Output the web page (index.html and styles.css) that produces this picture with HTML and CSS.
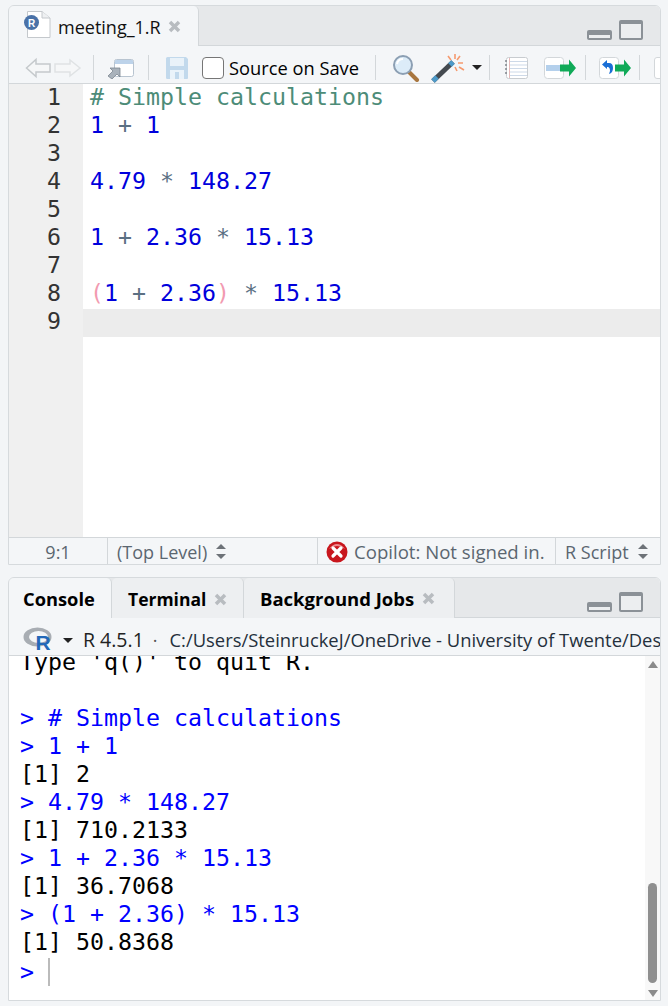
FILE: index.html
```html
<!DOCTYPE html>
<html lang="en">
<head>
<meta charset="utf-8">
<title>RStudio</title>
<link rel="stylesheet" href="styles.css">
</head>
<body>
<section class="pane source">
  <div class="tabstrip">
    <div class="tab file-tab">
      <svg class="file-icon" width="27" height="28" viewBox="0 0 27 28">
        <path d="M3.500 .5H18L26 7V26.500H3.500Z" fill="#fff" stroke="#c4c8cc"/>
        <path d="M18 .5V7H26" fill="#eef0f2" stroke="#c4c8cc"/>
        <circle cx="7.500" cy="11.500" r="7.500" fill="#4a72a8"/>
        <text x="7.500" y="15.500" class="r-glyph">R</text>
      </svg>
      <span class="tab-name">meeting_1.R</span>
      <svg class="x" width="13" height="13" viewBox="0 0 13 13"><path d="M2 2L11 11M11 2L2 11"/></svg>
    </div>
    <div class="win-btns">
      <svg width="58" height="22" viewBox="0 0 58 22">
        <rect x="1" y="11" width="25" height="10" rx="2" fill="#8b9197"/>
        <rect x="3" y="16" width="21" height="3" fill="#eceef0"/>
        <rect x="33" y="1" width="24" height="20" rx="2" fill="#8b9197"/>
        <rect x="35" y="5" width="20" height="14" fill="#eceef0"/>
      </svg>
    </div>
  </div>
  <div class="toolbar">
    <svg width="57" height="22" viewBox="0 0 57 22">
      <path d="M1.500 11L11 2.500V7H25V15H11V19.500Z" fill="#f6f7f8" stroke="#c5c9cc" stroke-width="1.500"/>
      <path d="M55 11L45 3V7H30V15H45V19Z" fill="#f6f7f8" stroke="#dfe2e4" stroke-width="1.500"/>
    </svg>
    <i class="sep s1"></i>
    <svg class="t-pop" width="28" height="22" viewBox="0 0 28 22">
      <rect x="7.500" y="2.500" width="19" height="17" rx="2" fill="#fff" stroke="#b8c4d0"/>
      <path d="M8 7V4Q8 3 9 3H25Q26 3 26 4V7Z" fill="#bdd3ea"/>
      <path d="M1 19L6 14L3 11H13V20L10 17L5 22Z" fill="#a9b2bb" stroke="#7c8791" stroke-width=".8"/>
    </svg>
    <i class="sep s2"></i>
    <svg class="t-save" width="24" height="24" viewBox="0 0 24 24">
      <path d="M1 2.500Q1 1 2.500 1H21L23 3V22Q23 23 22 23H2.500Q1 23 1 22Z" fill="#c2d9ec"/>
      <rect x="5" y="2" width="14" height="8" fill="#e9f2f9"/>
      <rect x="5" y="14" width="14" height="9" fill="#eaf3fa"/>
      <rect x="10" y="16" width="4" height="7" fill="#c2d9ec"/>
    </svg>
    <span class="check"></span>
    <span class="source-save">Source on Save</span>
    <i class="sep s3"></i>
    <svg class="t-find" width="28" height="28" viewBox="0 0 28 28">
      <path d="M16 17L25 26" stroke="#a8763f" stroke-width="4" stroke-linecap="round"/>
      <circle cx="11" cy="11" r="9" fill="#dcecf8" stroke="#8c9fb3" stroke-width="2"/>
      <path d="M5 10Q6 5 11 5" stroke="#fff" stroke-width="2" fill="none"/>
    </svg>
    <svg class="t-wand" width="34" height="30" viewBox="0 0 34 30">
      <path d="M2 28L22 9" stroke="#444a50" stroke-width="5"/>
      <path d="M2 28L6 24" stroke="#4d9ac9" stroke-width="5"/>
      <path d="M19 12L22 9" stroke="#4d9ac9" stroke-width="5"/>
      <path d="M24 1V6M32 10H27M24 14L26 18M29 3L26 7M17 3L20 7M33 17L28 14" stroke="#f59a6f" stroke-width="1.600"/>
    </svg>
    <span class="caret"></span>
    <i class="sep s4"></i>
    <svg class="t-note" width="24" height="24" viewBox="0 0 24 24">
      <rect x="1.500" y="1.500" width="21" height="21" rx="2" fill="#fff" stroke="#c8ccd0"/>
      <path d="M5 5.500H22M5 9H22M5 12.500H22M5 16H22M5 19.500H22" stroke="#cdd9e8"/>
      <path d="M4.500 2V22" stroke="#e5b8b8"/>
      <path d="M1 4V6M1 8V10M1 12V14M1 16V18" stroke="#80868c" stroke-width="1.500"/>
    </svg>
    <svg class="t-run" width="33" height="22" viewBox="0 0 33 22">
      <rect x=".5" y=".5" width="19" height="21" rx="3" fill="#fff" stroke="#d3d7da"/>
      <rect x="2" y="8" width="14" height="6" fill="#b4d0ec"/>
      <path d="M16 7.500H25V2.500L32 11L25 19.500V14.500H16Z" fill="#10aa58"/>
    </svg>
    <i class="sep s5"></i>
    <svg class="t-rerun" width="33" height="22" viewBox="0 0 33 22">
      <rect x=".5" y=".5" width="19" height="21" rx="3" fill="#fff" stroke="#d3d7da"/>
      <path d="M3 7.500L8 3V6H10Q14 6 14 11T10 17L11 14Q11 10 8.500 10H8V12Z" fill="#1a6fd6"/>
      <path d="M16 7.500H25V2.500L32 11L25 19.500V14.500H16Z" fill="#10aa58"/>
    </svg>
    <i class="sep s6"></i>
    <span class="t-cut"></span>
  </div>
  <div class="editor">
    <div class="gutter">
      <div class="gl">1</div><div class="gl">2</div><div class="gl">3</div><div class="gl">4</div><div class="gl">5</div><div class="gl">6</div><div class="gl">7</div><div class="gl">8</div><div class="gl">9</div>
    </div>
    <div class="code">
      <div class="ln cm"># Simple calculations</div>
      <div class="ln"><b>1</b> <s>+</s> <b>1</b></div>
      <div class="ln"></div>
      <div class="ln"><b>4.79</b> <s>*</s> <b>148.27</b></div>
      <div class="ln"></div>
      <div class="ln"><b>1</b> <s>+</s> <b>2.36</b> <s>*</s> <b>15.13</b></div>
      <div class="ln"></div>
      <div class="ln"><u>(</u><b>1</b> <s>+</s> <b>2.36</b><u>)</u> <s>*</s> <b>15.13</b></div>
      <div class="ln active"></div>
    </div>
  </div>
  <div class="status">
    <div class="st st-pos">9:1</div>
    <div class="st st-scope">(Top Level)<span class="updown"></span></div>
    <div class="st st-copilot">
      <svg width="22" height="22" viewBox="0 0 22 22">
        <circle cx="11" cy="11" r="10.500" fill="#c8161d"/>
        <path d="M3 8Q11 2 19 8Q15 3 11 3T3 8Z" fill="#ee8b8f"/>
        <path d="M7 7L15 15M15 7L7 15" stroke="#fff" stroke-width="3.200" stroke-linecap="round"/>
      </svg>
      <span>Copilot: Not signed in.</span>
    </div>
    <div class="st st-type">R Script<span class="updown"></span></div>
  </div>
</section>

<section class="pane con">
  <div class="tabstrip">
    <div class="tab con-tab">Console</div>
    <div class="tab off term">Terminal<svg class="x" width="13" height="13" viewBox="0 0 13 13"><path d="M2 2L11 11M11 2L2 11"/></svg></div>
    <div class="tab off jobs">Background Jobs<svg class="x" width="13" height="13" viewBox="0 0 13 13"><path d="M2 2L11 11M11 2L2 11"/></svg></div>
    <div class="win-btns">
      <svg width="58" height="22" viewBox="0 0 58 22">
        <rect x="1" y="11" width="25" height="10" rx="2" fill="#8b9197"/>
        <rect x="3" y="16" width="21" height="3" fill="#eceef0"/>
        <rect x="33" y="1" width="24" height="20" rx="2" fill="#8b9197"/>
        <rect x="35" y="5" width="20" height="14" fill="#eceef0"/>
      </svg>
    </div>
  </div>
  <div class="toolbar con-bar">
    <svg class="r-logo" width="32" height="24" viewBox="0 0 32 24">
      <ellipse cx="14.500" cy="10" rx="14" ry="9.500" fill="#a8adb3"/>
      <ellipse cx="15.500" cy="10" rx="9.500" ry="6" fill="#f4f6f8"/>
      <text x="20" y="23" class="r-big">R</text>
    </svg>
    <span class="caret c2"></span>
    <span class="rver">R 4.5.1</span>
    <span class="dot">·</span>
    <span class="path">C:/Users/SteinruckeJ/OneDrive - University of Twente/Desktop</span>
  </div>
  <div class="console">
    <div class="out">
      <div class="cl first">Type 'q()' to quit R.</div>
      <div class="cl"></div>
      <div class="cl in">&gt; # Simple calculations</div>
      <div class="cl in">&gt; 1 + 1</div>
      <div class="cl">[1] 2</div>
      <div class="cl in">&gt; 4.79 * 148.27</div>
      <div class="cl">[1] 710.2133</div>
      <div class="cl in">&gt; 1 + 2.36 * 15.13</div>
      <div class="cl">[1] 36.7068</div>
      <div class="cl in">&gt; (1 + 2.36) * 15.13</div>
      <div class="cl">[1] 50.8368</div>
      <div class="cl in prompt">&gt; <span class="cursor"></span></div>
    </div>
    <div class="scroll">
      <span class="arr up"></span>
      <span class="thumb"></span>
      <span class="arr down"></span>
    </div>
  </div>
</section>
</body>
</html>
```
FILE: styles.css
```css
* { box-sizing: border-box; }
html, body { margin: 0; height: 1006px; overflow: hidden; }
body {
  background: #f3f5f7;
  padding: 5px 7px 0 8px;
  font-family: "Open Sans", "Noto Sans", sans-serif;
  font-size: 18px;
  color: #000;
}
.pane {
  border: 1px solid #d6dadd;
  border-radius: 6px 6px 0 0;
  background: #fff;
  overflow: hidden;
}
.source { height: 560px; margin-bottom: 12px; }
.con { height: 424px; }
.tabstrip {
  height: 40px;
  background: #e6e8ea;
  display: flex;
  align-items: flex-end;
  border-bottom: 1px solid #d3d7da;
}
.tab {
  height: 40px;
  background: #edeff1;
  border-right: 1px solid #d3d7da;
  border-radius: 5px 5px 0 0;
  display: flex;
  align-items: center;
  white-space: nowrap;
  margin-bottom: -1px;
}
.file-tab {
  width: 190px;
  background: #f4f6f8;
  padding-left: 15px;
  color: #111;
}
.file-icon { margin-right: 7px; margin-top: -3px; flex: none; }
.r-glyph { font: bold 10px "Liberation Sans", sans-serif; fill: #fff; text-anchor: middle; }
.tab-name { font-size: 18px; margin-top: 1px; }
.x { flex: none; margin-left: 7px; margin-top: 1px; }
.x path { stroke: #b8bcc0; stroke-width: 3.500; fill: none; }
.win-btns { margin-left: auto; padding: 0 16px 4px 0; line-height: 0; align-self: flex-end; }
.toolbar {
  height: 38px;
  background: #f4f6f8;
  border-bottom: 1px solid #d3d7da;
  display: flex;
  align-items: center;
  overflow: hidden;
  white-space: nowrap;
  padding: 6px 0 0 16px;
}
.toolbar svg { flex: none; }
.sep { flex: none; width: 1px; height: 25px; background: #d3d7da; }
.s1 { margin-left: 11px; }
.t-pop { margin-left: 13px; }
.s2 { margin-left: 13px; }
.t-save { margin-left: 16px; }
.check {
  flex: none;
  width: 22px; height: 22px;
  margin-left: 13px;
  border: 1px solid #767676;
  border-radius: 4px;
  background: #fff;
}
.source-save { margin-left: 5px; font-size: 18.300px; }
.s3 { margin-left: 16px; }
.t-find { margin-left: 16px; }
.t-wand { margin-left: 11px; }
.caret {
  flex: none;
  width: 0; height: 0;
  margin-left: 7px;
  border: 5px solid transparent;
  border-top: 5px solid #222;
  border-bottom: 0;
}
.s4 { margin-left: 7px; }
.t-note { margin-left: 15px; }
.t-run { margin-left: 15px; }
.s5 { margin-left: 8px; }
.t-rerun { margin-left: 13px; }
.s6 { margin-left: 7px; }
.t-cut {
  flex: none;
  width: 20px; height: 22px;
  margin-left: 14px;
  background: #fff;
  border: 1px solid #d3d7da;
  border-radius: 3px;
}
.editor {
  height: 453px;
  display: flex;
  padding-top: 1px;
  font-family: "DejaVu Sans Mono", monospace;
  font-size: 23.25px;
}
.gutter {
  width: 74px;
  flex: none;
  background: #f0f0f0;
  margin-top: -1px;
  padding: 1px 22px 0 0;
  text-align: right;
  color: #333;
}
.gl { height: 28px; line-height: 24px; }
.code { flex: 1; }
.ln { height: 28px; line-height: 24px; padding-left: 7px; white-space: pre; color: #0000dc; }
.ln.active { background: #ececec; }
.ln.cm { color: #4d8c78; }
.ln b { font-weight: 400; color: #0000dc; }
.ln s { text-decoration: none; color: #5b7083; }
.ln u { text-decoration: none; color: #f29ab0; }
.status {
  height: 28px;
  background: #f4f6f8;
  border-top: 1px solid #d3d7da;
  display: flex;
  color: #5b6670;
  font-size: 18px;
}
.st {
  display: flex;
  align-items: center;
  border-right: 1px solid #d3d7da;
  white-space: nowrap;
}
.st-pos { width: 99px; justify-content: center; }
.st-scope { width: 210px; padding-left: 9px; }
.st-copilot { width: 238px; padding-left: 8px; gap: 6px; font-size: 18.600px; }
.st-type { flex: 1; padding-left: 9px; border-right: 0; }
.updown {
  width: 10px; height: 15px;
  margin-left: 9px;
  position: relative;
  display: inline-block;
}
.updown::before, .updown::after {
  content: "";
  position: absolute;
  left: 0;
  border: 5px solid transparent;
}
.updown::before { top: 0; border-top: 0; border-bottom: 5px solid #6d7278; }
.updown::after { bottom: 0; border-bottom: 0; border-top: 5px solid #6d7278; }
.con-tab {
  width: 103px;
  background: #f4f6f8;
  font-weight: 700;
  font-size: 18.300px;
  padding-left: 14px;
}
.off { font-weight: 700; padding-left: 16px; }
.term { width: 132px; font-size: 17.500px; padding-top: 2px; }
.jobs { width: 211px; font-size: 18.500px; }
.off .x { margin-left: 8px; }
.con-bar { padding-left: 14px; }
.r-logo { margin-top: -2px; }
.r-big { font: bold 21px "Liberation Sans", sans-serif; fill: #2268b8; text-anchor: middle; }
.c2 { margin-left: 8px; margin-top: 1px; }
.rver { margin-left: 10px; font-size: 19.500px; color: #222; }
.dot { margin-left: 9px; color: #555; }
.path { margin-left: 12px; font-size: 18.400px; color: #24303c; }
.console {
  display: flex;
  height: 345px;
  overflow: hidden;
}
.out {
  flex: 1;
  min-width: 0;
  padding-left: 11px;
  font-family: "DejaVu Sans Mono", monospace;
  font-size: 23.25px;
  color: #000;
}
.cl { height: 28px; line-height: 28px; white-space: pre; }
.first { margin-top: -8px; }
.in { color: #0000ff; }
.prompt { margin-top: 2px; }
.cursor {
  display: inline-block;
  width: 2px;
  height: 28px;
  background: #bbb;
  vertical-align: top;
}
.scroll {
  width: 15px;
  flex: none;
  background: #f8f8f8;
  display: flex;
  flex-direction: column;
  align-items: center;
  padding: 5px 0 4px;
}
.arr { width: 0; height: 0; border: 5px solid transparent; }
.up { border-top: 0; border-bottom: 7px solid #8a8a8a; }
.down { border-bottom: 0; border-top: 7px solid #8a8a8a; margin-top: 7px; }
.thumb { width: 9px; height: 100px; background: #8f8f8f; border-radius: 5px; margin-top: auto; }
```
